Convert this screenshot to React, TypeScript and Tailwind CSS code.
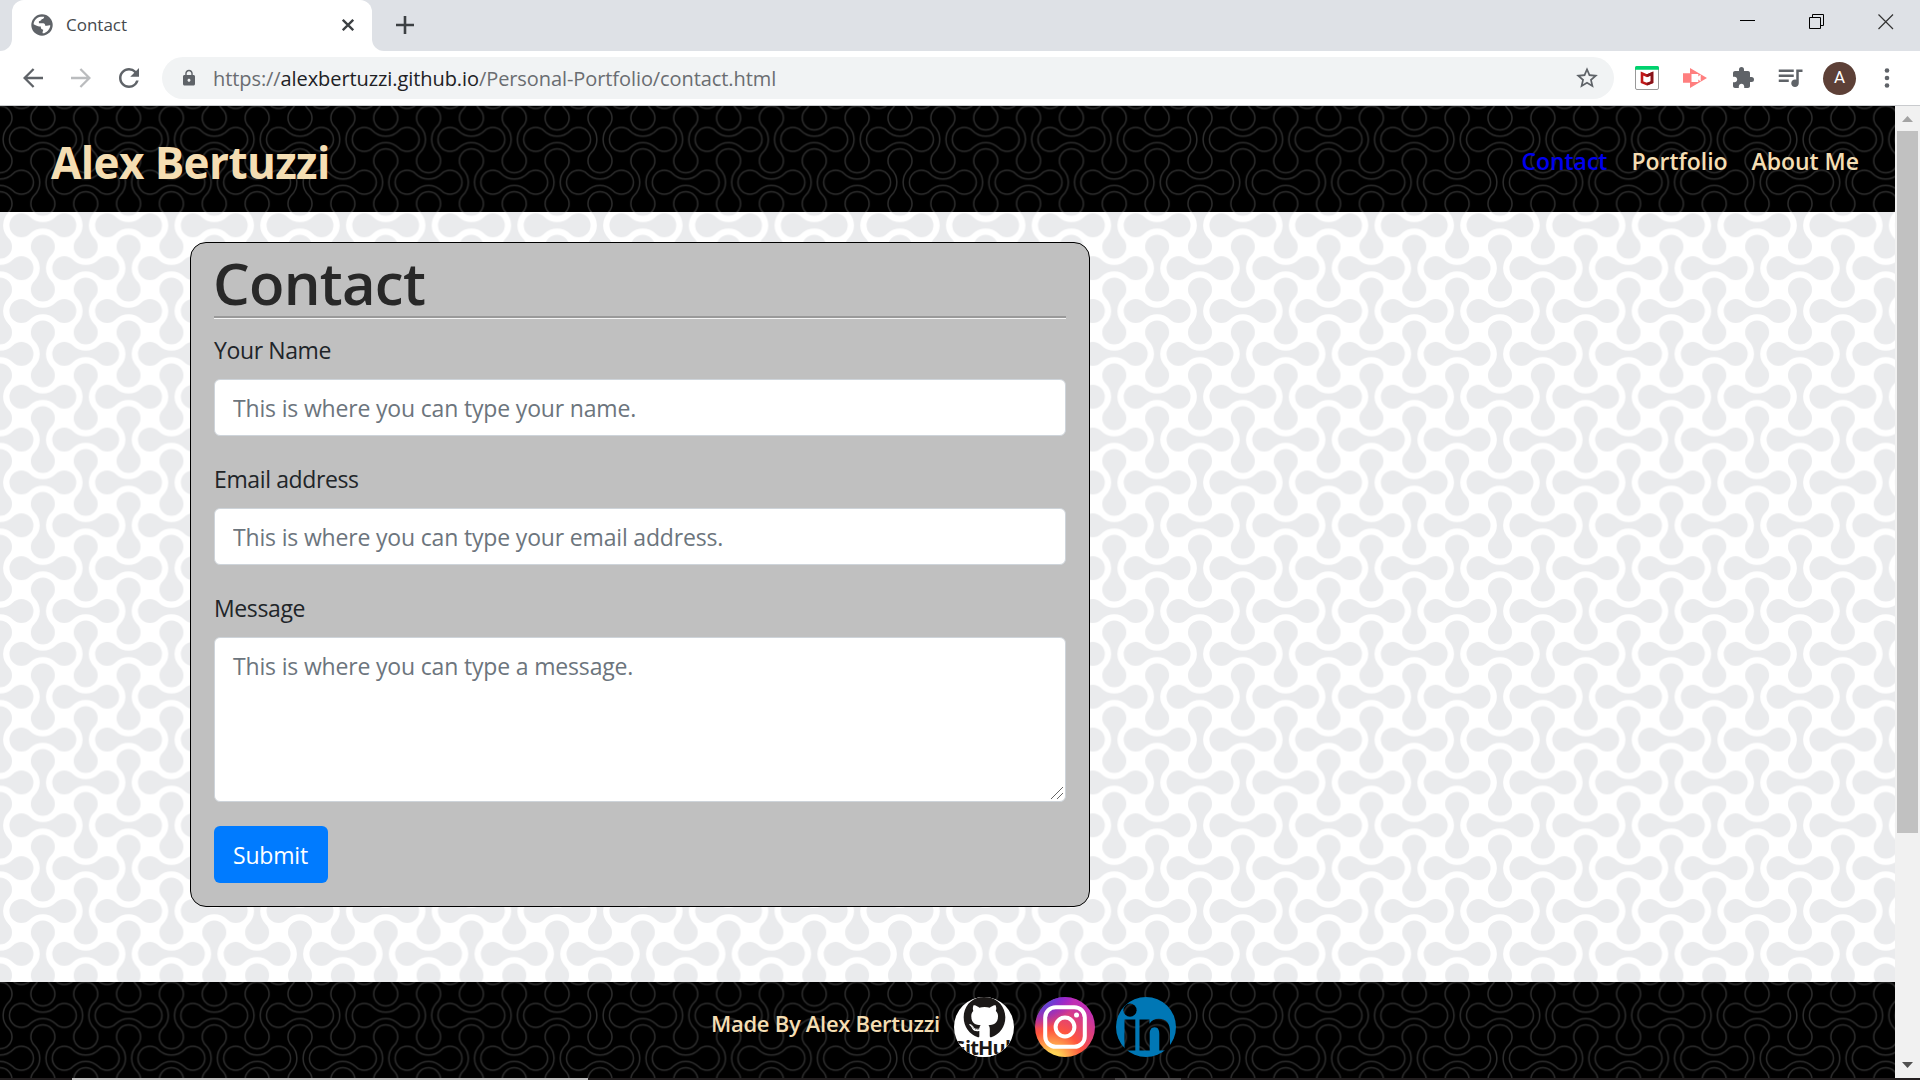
import React from "react";
import { MdExtension, MdLock, MdQueueMusic, MdRefresh, MdStarBorder } from "react-icons/md";
import { FaGithub } from "react-icons/fa";

const TILE = 600 / 7;
const HALF = TILE / 2;
const BONE =
  "M-12.945,-8.485 A18.3,18.3 0 0 0 12.945,-8.485 A12,12 0 1 1 12.945,8.485 A18.3,18.3 0 0 0 -12.945,8.485 A12,12 0 1 1 -12.945,-8.485Z";

const flat: [number, number][] = [[HALF, 0], [HALF, TILE], [0, HALF], [TILE, HALF]];
const upright: [number, number][] = [[0, 0], [TILE, 0], [0, TILE], [TILE, TILE], [HALF, HALF]];

function BonePattern({ id, fill, stroke, offset }: { id: string; fill: string; stroke: string; offset: number }) {
  return (
    <svg className="pointer-events-none absolute inset-0 h-full w-full" aria-hidden="true">
      <defs>
        <pattern id={id} width={TILE} height={TILE} patternUnits="userSpaceOnUse" patternTransform={`translate(0 ${offset})`}>
          <g fill={fill} stroke={stroke} strokeWidth="1.5">
            {flat.map(([x, y]) => (
              <path key={`f${x}-${y}`} d={BONE} transform={`translate(${x} ${y})`} />
            ))}
            {upright.map(([x, y]) => (
              <path key={`u${x}-${y}`} d={BONE} transform={`translate(${x} ${y}) rotate(90)`} />
            ))}
          </g>
        </pattern>
      </defs>
      <rect width="100%" height="100%" fill={`url(#${id})`} />
    </svg>
  );
}

function TabStrip() {
  return (
    <div className="flex h-[51px] shrink-0 items-stretch bg-[#dee1e6]">
      <div className="w-3 bg-white">
        <div className="h-full rounded-br-xl bg-[#dee1e6]" />
      </div>
      <div className="flex w-[360px] items-center rounded-t-xl bg-white pb-[1px] pl-[19px] pr-[18px]">
        <svg width="22" height="22" viewBox="0 0 22 22">
          <circle cx="11" cy="11" r="10.7" fill="#5f6368" />
          <path
            d="M2.6 10.2C2.9 6.3 6 3 9.8 2.7h3.4c-.2 1.5-1 2.3-2.4 2.4-.5 1.5-1.3 2-2.9 2.1v2.1h4.3c1.4.2 2 1 2 2.4h1.7c1.3 0 2.2-.7 3.4-.3-.4 3.8-3.7 7.7-7.6 7.9-.5-1.5.5-2.1.5-3.5-1.9-.3-2.5-1.3-2.4-3.2-2.3-.1-4.4-.9-7.2-2.4z"
            fill="#fff"
          />
        </svg>
        <span className="ml-[13px] text-[17px] leading-6 text-[#45494d]">Contact</span>
        <svg className="ml-auto" width="12" height="12" viewBox="0 0 12 12" stroke="#3c4043" strokeWidth="2.3">
          <path d="M.8.8l10.4 10.4M11.2.8L.8 11.2" />
        </svg>
      </div>
      <div className="w-3 bg-white">
        <div className="h-full rounded-bl-xl bg-[#dee1e6]" />
      </div>
      <div className="flex flex-1 items-center pl-3 pb-[1px]">
        <svg width="18" height="18" viewBox="0 0 18 18" stroke="#3c4043" strokeWidth="2.6">
          <path d="M9 0v18M0 9h18" />
        </svg>
      </div>
      <div className="flex h-[43px] items-center gap-[53px] pr-[26px]">
        <svg width="16" height="16" viewBox="0 0 16 16" stroke="#000" fill="none">
          <path d="M0 6.5h15" />
        </svg>
        <svg width="16" height="16" viewBox="0 0 16 16" stroke="#000" fill="none">
          <path d="M.5 3.5h11v11H.5zM3.5 3.5v-3h11v11h-3" />
        </svg>
        <svg width="16" height="16" viewBox="0 0 16 16" stroke="#333" strokeWidth="1.2" fill="none">
          <path d="M.5.5l14.5 14.5M15 .5L.5 15" />
        </svg>
      </div>
    </div>
  );
}

function Toolbar() {
  return (
    <div className="flex h-[55px] shrink-0 items-center border-b border-[#c9cbce] bg-white pl-[23px] text-[#5f6368]">
      <svg width="20" height="20" viewBox="0 0 20 20" fill="none" stroke="#5f6368" strokeWidth="2.3">
        <path d="M20 10H1.8M10.6 1L1.6 10l9 9" />
      </svg>
      <svg className="ml-7" width="20" height="20" viewBox="0 0 20 20" fill="none" stroke="#babcbe" strokeWidth="2.3">
        <path d="M0 10h18.2M9.400 1l9 9-9 9" />
      </svg>
      <MdRefresh className="ml-[23px] size-[30px]" />
      <div className="ml-[18px] flex h-[42px] w-[1452px] items-center rounded-full bg-[#f1f3f4] pl-[18px] pr-[14px]">
        <MdLock className="size-[18px]" />
        <span className="ml-[15px] pt-[2px] text-[20px] leading-7 tracking-[-0.08px] text-[#6a6d71]">
          https://<span className="text-[#202124]">alexbertuzzi.github.io</span>/Personal-Portfolio/contact.html
        </span>
        <MdStarBorder className="ml-auto size-[26px]" />
      </div>
      <svg className="ml-[21px]" width="24" height="24" viewBox="0 0 24 24">
        <rect x=".5" y=".5" width="23" height="23" rx="1.5" fill="#fff" stroke="#999" />
        <path d="M0 3.800V1.500Q0 0 1.500 0h21Q24 0 24 1.500v2.300z" fill="#00d26e" />
        <path d="M7 7.500l5 2.300 5-2.300v8.700l-5 2-5-2z" fill="none" stroke="#c01818" strokeWidth="2.6" />
        <path d="M12 9.800l5-2.300v8.700l-5 2" fill="none" stroke="#86131a" strokeWidth="2.6" />
      </svg>
      <svg className="ml-6" width="24" height="20" viewBox="0 0 24 20" fill="#ff7f7f">
        <path d="M0 5.200h7v9.600H0zM7 0l17 10L7 20z" />
        <path d="M8.500 6h6.800v2.400l2.400-1.900v7l-2.400-1.900V14H8.500z" fill="#fff" />
      </svg>
      <MdExtension className="ml-6 size-6" />
      <MdQueueMusic className="ml-5 mt-[-3px] size-[30px]" />
      <div className="ml-[18px] flex size-[33px] items-center justify-center rounded-full bg-[#5d4037] font-['Roboto'] text-[17px] text-white">
        A
      </div>
      <svg className="ml-7" width="6" height="20" viewBox="0 0 6 20" fill="#5f6368">
        <circle cx="3" cy="2.5" r="2.3" />
        <circle cx="3" cy="10" r="2.3" />
        <circle cx="3" cy="17.5" r="2.3" />
      </svg>
    </div>
  );
}

function SiteHeader() {
  return (
    <header className="relative h-[106px] shrink-0 bg-black">
      <BonePattern id="header-bones" fill="#000" stroke="#2d2d2d" offset={33.4} />
      <div className="relative flex h-full items-center justify-between pl-[51px] pr-[36px] pt-[4px] text-[#f5deb3]">
        <h1 className="pt-[1px] text-[44px] font-bold leading-none tracking-[-0.6px]">Alex Bertuzzi</h1>
        <nav className="flex gap-6 pt-[1px] text-[23px] font-semibold leading-none tracking-[-0.03px]">
          <a className="text-[#0000ee]">Contact</a>
          <a>Portfolio</a>
          <a>About Me</a>
        </nav>
      </div>
    </header>
  );
}

const labelClass = "block h-9 pt-[2px] text-[23px] leading-[34px] tracking-[-0.38px] text-[#212529]";
const fieldClass =
  "mt-3 block w-full rounded-md border border-[#ced4da] bg-white px-[18px] text-[23px] tracking-[-0.17px] outline-none placeholder:text-[#6c757d] placeholder:opacity-100";

function ContactCard() {
  return (
    <section className="ml-[190px] mt-[30px] h-[665px] w-[900px] rounded-2xl border border-black bg-[#c0c0c0] px-[23px]">
      <h2 className="ml-[-1px] pt-[7px] text-[58px] font-semibold leading-[66px] tracking-[-0.75px] text-[#282828]">Contact</h2>
      <div className="h-[3px] border-b border-[#f4f4f4] bg-[#999]" />
      <form className="pt-3">
        <label className={labelClass}>Your Name</label>
        <input className={fieldClass + " h-[57px]"} placeholder="This is where you can type your name." />
        <label className={labelClass + " mt-6"}>Email address</label>
        <input className={fieldClass + " h-[57px]"} placeholder="This is where you can type your email address." />
        <label className={labelClass + " mt-6"}>Message</label>
        <textarea
          className={fieldClass + " h-[165px] resize-none pt-[10px] leading-9"}
          placeholder="This is where you can type a message."
        />
        <div className="relative h-0">
          <svg className="absolute bottom-[3px] right-[3px]" width="12" height="12" viewBox="0 0 12 12" stroke="#666" strokeWidth="1">
            <path d="M0 12L12 0M6 12l6-6" />
          </svg>
        </div>
        <button
          type="button"
          className="mt-6 block h-[57px] w-[114px] rounded-md bg-[#007bff] pr-[1px] pt-[1px] text-[23px] leading-none tracking-[-0.2px] text-white"
        >
          Submit
        </button>
      </form>
    </section>
  );
}

function GithubBadge() {
  return (
    <div className="relative size-[60px] overflow-hidden rounded-full bg-white text-[#1b1817]">
      <FaGithub className="absolute left-[9px] top-[-1px] size-[43px]" />
      <div className="absolute inset-x-0 bottom-0 h-[18px] bg-white" />
      <span className="absolute left-1/2 top-[42px] -translate-x-1/2 text-[20px] font-bold leading-[18px] tracking-[-0.8px]">
        GitHub
      </span>
    </div>
  );
}

function InstagramBadge() {
  return (
    <svg width="60" height="60" viewBox="0 0 60 60">
      <defs>
        <radialGradient id="ig-warm" gradientUnits="userSpaceOnUse" cx="17" cy="64" r="62">
          <stop offset="0" stopColor="#ffdd55" />
          <stop offset=".15" stopColor="#ffd155" />
          <stop offset=".5" stopColor="#ff543e" />
          <stop offset="1" stopColor="#c02fb4" />
        </radialGradient>
        <radialGradient id="ig-cool" gradientUnits="userSpaceOnUse" cx="4" cy="-4" r="36">
          <stop offset="0" stopColor="#3771c8" />
          <stop offset=".4" stopColor="#5b45d8" stopOpacity=".9" />
          <stop offset="1" stopColor="#6600ff" stopOpacity="0" />
        </radialGradient>
      </defs>
      <circle cx="30" cy="30" r="30" fill="url(#ig-warm)" />
      <circle cx="30" cy="30" r="30" fill="url(#ig-cool)" />
      <g fill="none" stroke="#fff" strokeWidth="4">
        <rect x="10.2" y="10.2" width="39.6" height="39.6" rx="10.5" />
        <circle cx="30" cy="30" r="9.4" />
      </g>
      <circle cx="41.5" cy="18" r="2.5" fill="#fff" />
    </svg>
  );
}

function LinkedinBadge() {
  return (
    <svg width="60" height="60" viewBox="0 0 60 60">
      <mask id="in-cutout">
        <rect width="60" height="60" fill="#fff" />
        <circle cx="14" cy="13.2" r="6.6" fill="#000" />
        <path
          d="M8.500 22.500h10.800v31H8.500zM23.500 22.500h10v4.200c2-3.300 5-4.900 9.300-4.900 7.900 0 11.200 5 11.200 13.200v18.500H43.300V37c0-4-1.200-6.800-4.600-6.800-3.600 0-5 2.800-5 6.800v16.500H23.500z"
          fill="#000"
        />
      </mask>
      <circle cx="30" cy="30" r="30" fill="#0077b5" mask="url(#in-cutout)" />
    </svg>
  );
}

function SiteFooter() {
  return (
    <footer className="relative h-24 shrink-0 bg-black">
      <BonePattern id="footer-bones" fill="#000" stroke="#2d2d2d" offset={33.4} />
      <div className="relative flex pl-[711px] pt-[15px]">
        <p className="w-[243px] pt-[11px] text-[22px] font-semibold leading-[30px] tracking-[-0.29px] text-[#f5deb3]">
          Made By Alex Bertuzzi
        </p>
        <div className="flex gap-[21px]">
          <GithubBadge />
          <InstagramBadge />
          <LinkedinBadge />
        </div>
      </div>
    </footer>
  );
}

function Scrollbar() {
  return (
    <div className="flex w-[25px] shrink-0 flex-col items-center bg-[#f1f1f1]">
      <svg className="mt-[10px] shrink-0" width="11" height="6" viewBox="0 0 11 6" fill="#a3a3a3">
        <path d="M0 6L5.5 0 11 6z" />
      </svg>
      <div className="mt-[9px] h-[702px] w-[21px] bg-[#c1c1c1]" />
      <svg className="mb-[10px] mt-auto shrink-0" width="11" height="6" viewBox="0 0 11 6" fill="#505050">
        <path d="M0 0l5.5 6L11 0z" />
      </svg>
    </div>
  );
}

export default function App() {
  return (
    <div className="flex h-[1080px] w-[1920px] flex-col overflow-hidden bg-white font-['Open_Sans',sans-serif]">
      <TabStrip />
      <Toolbar />
      <div className="flex h-[972px] shrink-0">
        <div className="flex w-[1895px] flex-col">
          <SiteHeader />
          <main className="relative flex-1 bg-white">
            <BonePattern id="page-bones" fill="#eaebed" stroke="none" offset={13.3} />
            <div className="relative flex">
              <ContactCard />
            </div>
          </main>
          <SiteFooter />
        </div>
        <Scrollbar />
      </div>
      <div className="flex h-[2px] bg-[#231f20]">
        <div className="w-[72px]" />
        <div className="w-[516px] bg-[#c0c0c0]" />
        <div className="ml-[527px] w-[66px] bg-[#4a4748]" />
      </div>
    </div>
  );
}
